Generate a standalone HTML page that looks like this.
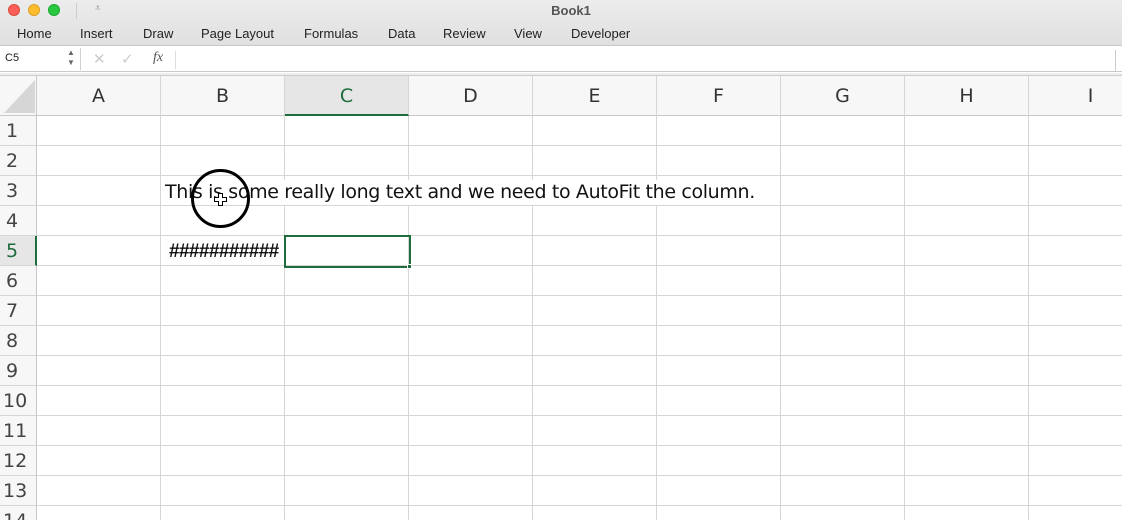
<!DOCTYPE html>
<html><head><meta charset="utf-8"><style>
*{margin:0;padding:0;box-sizing:border-box}
html,body{width:1122px;height:520px;overflow:hidden}
body{background:#fff;font-family:"Liberation Sans",sans-serif;position:relative}
.a{position:absolute}
.title{left:0;top:0;width:1122px;height:46px;background:linear-gradient(#ececec,#e0e0e0);border-bottom:1px solid #c8c8c8}
.dot{top:4px;width:12px;height:12px;border-radius:50%}
.tab{top:26px;font-size:13px;color:#222}
.fbar{left:0;top:46px;width:1122px;height:26px;background:#fff;border-bottom:1px solid #c9c9c9}
.ch{top:76px;height:40px;width:124px;background:#f7f7f7;border-right:1px solid #d6d6d6;border-bottom:1px solid #c8c8c8;text-align:center;font-size:19px;line-height:40px;color:#333;font-family:"DejaVu Sans",sans-serif}
.rh{left:0;width:37px;height:30px;background:#f7f7f7;border-right:1px solid #c8c8c8;border-bottom:1px solid #d6d6d6;font-size:19px;line-height:30px;padding-left:6px;color:#444;font-family:"DejaVu Sans",sans-serif}
.grid{left:37px;top:116px;width:1085px;height:404px;background:
repeating-linear-gradient(90deg,transparent 0 123px,#d6d6d6 123px 124px),
repeating-linear-gradient(180deg,transparent 0 29px,#d6d6d6 29px 30px)}
</style></head><body>
<div class="a title"></div>
<div class="a dot" style="left:8px;background:#fc5f57;border:1px solid #de4a42"></div>
<div class="a dot" style="left:28px;background:#fdbc2e;border:1px solid #dea123"></div>
<div class="a dot" style="left:48px;background:#28c840;border:1px solid #1ea92f"></div>
<div class="a" style="left:76px;top:3px;width:1px;height:16px;background:#ccc"></div>
<div class="a" style="left:95px;top:3px;font-size:10px;color:#888">⩡</div>
<div class="a" style="left:0;top:3px;width:1122px;text-align:center;font-size:13px;color:#555;font-weight:bold;padding-left:20px">Book1</div>
<div class="a tab" style="left:17px">Home</div>
<div class="a tab" style="left:80px">Insert</div>
<div class="a tab" style="left:143px">Draw</div>
<div class="a tab" style="left:201px">Page Layout</div>
<div class="a tab" style="left:304px">Formulas</div>
<div class="a tab" style="left:388px">Data</div>
<div class="a tab" style="left:443px">Review</div>
<div class="a tab" style="left:514px">View</div>
<div class="a tab" style="left:571px">Developer</div>
<div class="a fbar"></div>
<div class="a" style="left:5px;top:52px;font-size:11px;color:#222">C5</div>
<div class="a" style="left:67px;top:48px;font-size:8px;color:#666;line-height:10px">▲<br>▼</div>
<div class="a" style="left:80px;top:48px;width:1px;height:22px;background:#d0d0d0"></div>
<div class="a" style="left:93px;top:50px;font-size:15px;color:#ccc">✕</div>
<div class="a" style="left:121px;top:50px;font-size:15px;color:#ccc">✓</div>
<div class="a" style="left:153px;top:50px;font-size:14px;color:#555;font-family:'Liberation Serif',serif;font-style:italic">fx</div>
<div class="a" style="left:175px;top:51px;width:1px;height:18px;background:#ddd"></div>
<div class="a" style="left:1115px;top:50px;width:1px;height:22px;background:#ccc"></div>
<div class="a" style="left:0;top:73px;width:1122px;height:3px;background:#eee;border-bottom:1px solid #ccc"></div>
<div class="a grid"></div>
<div class="a" style="left:0;top:76px;width:37px;height:40px;background:#f7f7f7;border-right:1px solid #c8c8c8;border-bottom:1px solid #c8c8c8"></div>
<svg class="a" style="left:2px;top:78px" width="34" height="36"><polygon points="33,2 33,35 2,35" fill="#d6d6d6"/></svg>
<div class="a ch" style="left:37px">A</div>
<div class="a ch" style="left:161px">B</div>
<div class="a ch" style="left:285px;background:#e6e6e6;color:#1e6b3c;border-bottom:2px solid #1e6b3c">C</div>
<div class="a ch" style="left:409px">D</div>
<div class="a ch" style="left:533px">E</div>
<div class="a ch" style="left:657px">F</div>
<div class="a ch" style="left:781px">G</div>
<div class="a ch" style="left:905px">H</div>
<div class="a ch" style="left:1029px">I</div>
<div class="a rh" style="top:116px">1</div>
<div class="a rh" style="top:146px">2</div>
<div class="a rh" style="top:176px">3</div>
<div class="a rh" style="top:206px">4</div>
<div class="a rh" style="top:236px;background:#e6e6e6;color:#1e6b3c;border-right:2px solid #1e6b3c">5</div>
<div class="a rh" style="top:266px">6</div>
<div class="a rh" style="top:296px">7</div>
<div class="a rh" style="top:326px">8</div>
<div class="a rh" style="top:356px">9</div>
<div class="a rh" style="top:386px;padding-left:3px">10</div>
<div class="a rh" style="top:416px;padding-left:3px">11</div>
<div class="a rh" style="top:446px;padding-left:3px">12</div>
<div class="a rh" style="top:476px;padding-left:3px">13</div>
<div class="a rh" style="top:506px;padding-left:3px">14</div>
<div class="a" style="left:165px;top:180px;width:595px;height:25px;background:#fff"></div>
<div class="a" style="left:165px;top:181px;font-size:19px;color:#111;font-family:'DejaVu Sans',sans-serif;letter-spacing:-0.35px;white-space:nowrap">This is some really long text and we need to AutoFit the column.</div>
<div class="a" style="left:169px;top:241px;font-size:19px;color:#111;font-family:'Liberation Sans',sans-serif;font-weight:bold;letter-spacing:-0.6px;white-space:nowrap">###########</div>
<div class="a" style="left:284px;top:235px;width:127px;height:33px;border:2px solid #1e6b3c"></div>
<div class="a" style="left:407px;top:264px;width:5px;height:5px;background:#1e6b3c;border:1px solid #fff"></div>
<div class="a" style="left:191px;top:169px;width:59px;height:59px;border:3px solid #000;border-radius:50%"></div>
<svg class="a" style="left:213px;top:192px" width="15" height="15"><path d="M5.5 1.5h4v4h4v4h-4v4h-4v-4h-4v-4h4z" fill="#fff" stroke="#000" stroke-width="1"/></svg>
</body></html>
